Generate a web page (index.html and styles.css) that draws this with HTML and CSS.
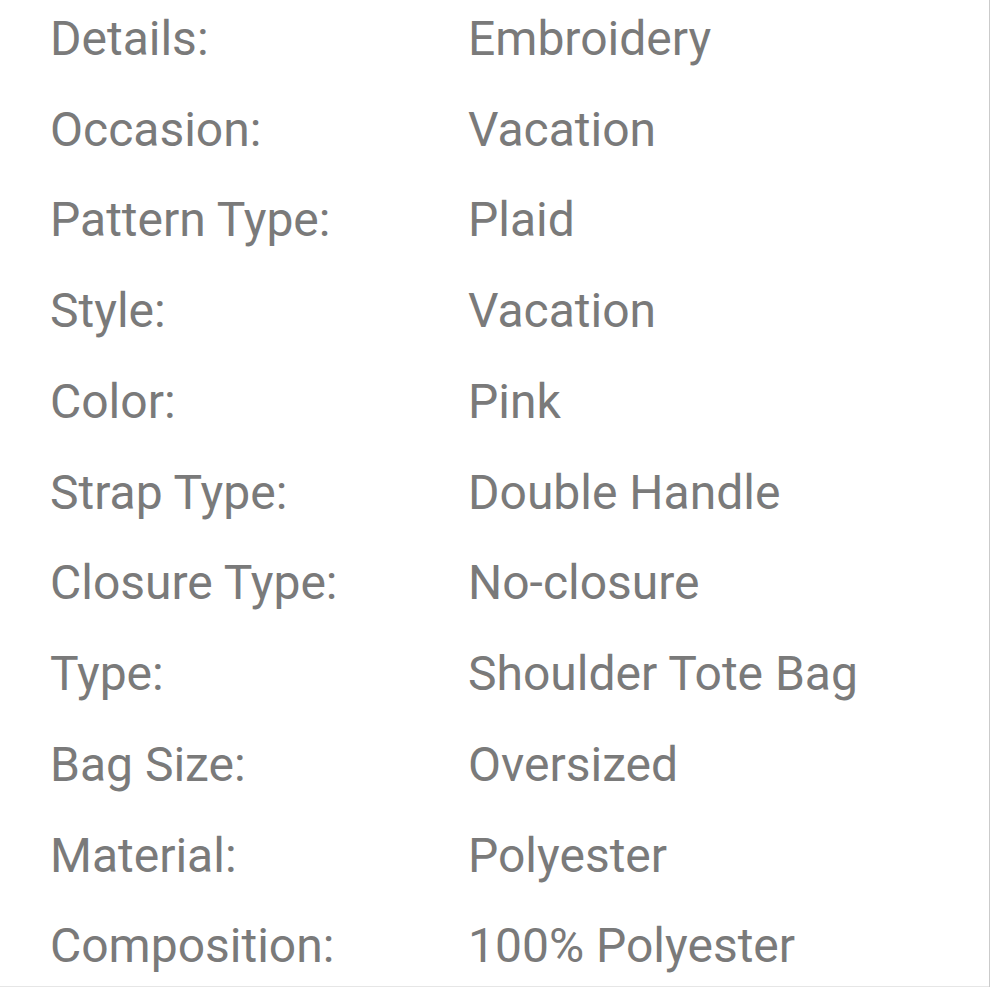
FILE: index.html
```html
<!DOCTYPE html>
<html lang="en">
<head>
<meta charset="utf-8">
<title>Product details</title>
<link rel="stylesheet" href="styles.css">
</head>
<body>
<div class="panel">
  <dl class="specs">
    <div class="row"><dt>Details:</dt><dd>Embroidery</dd></div>
    <div class="row"><dt>Occasion:</dt><dd>Vacation</dd></div>
    <div class="row"><dt>Pattern Type:</dt><dd>Plaid</dd></div>
    <div class="row"><dt>Style:</dt><dd>Vacation</dd></div>
    <div class="row"><dt>Color:</dt><dd>Pink</dd></div>
    <div class="row"><dt>Strap Type:</dt><dd>Double Handle</dd></div>
    <div class="row"><dt>Closure Type:</dt><dd>No-closure</dd></div>
    <div class="row"><dt>Type:</dt><dd>Shoulder Tote Bag</dd></div>
    <div class="row"><dt>Bag Size:</dt><dd>Oversized</dd></div>
    <div class="row"><dt>Material:</dt><dd>Polyester</dd></div>
    <div class="row"><dt>Composition:</dt><dd>100% Polyester</dd></div>
  </dl>
</div>
</body>
</html>
```
FILE: styles.css
```css
html, body {
  margin: 0;
  padding: 0;
  background: #ffffff;
  overflow: hidden;
}
.panel {
  width: 989px;
  height: 987px;
  border-right: 1px solid #cbcbcb;
  overflow: hidden;
}
.specs {
  margin: -12.25px 0 0 0;
  padding: 0 0 0 50px;
  border-bottom: 1px solid #e6e6e6;
  font-family: Roboto, "Noto Sans", sans-serif;
  font-size: 48px;
  color: #7a7a7a;
}
.row {
  display: grid;
  grid-template-columns: 418px 1fr;
  height: 90.75px;
  box-sizing: border-box;
  padding-top: 11.15px;
  line-height: 79.6px;
}
.row dt, .row dd {
  margin: 0;
  white-space: nowrap;
}
```
